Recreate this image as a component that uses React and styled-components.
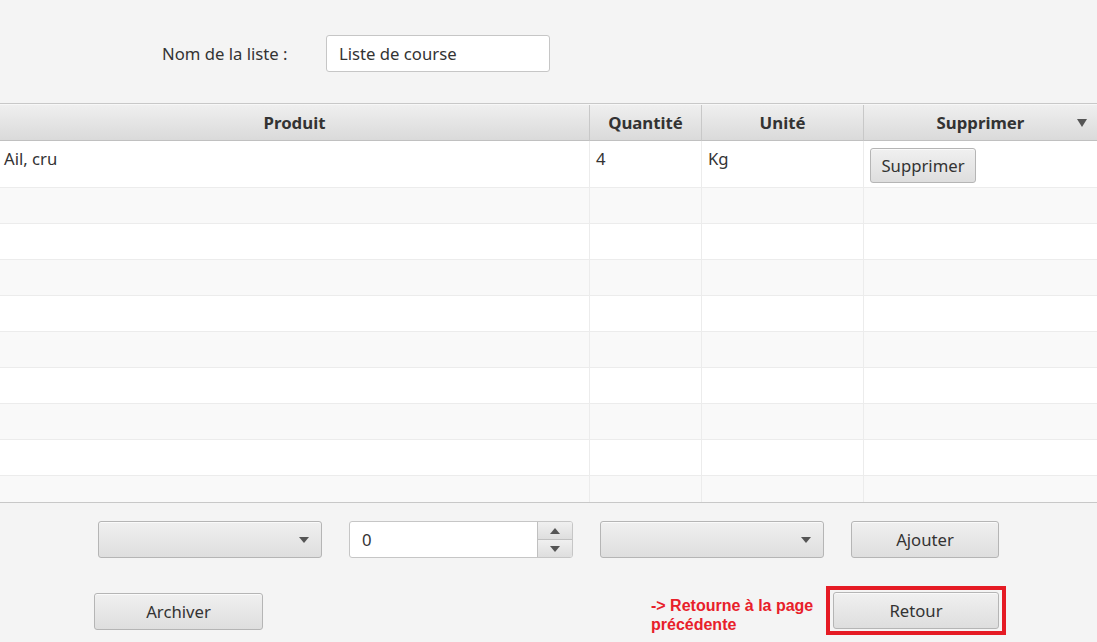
import React from 'react'
import styled, { createGlobalStyle } from 'styled-components'

const GlobalStyle = createGlobalStyle`
  html, body {
    margin: 0;
    padding: 0;
    background: #f4f4f4;
    font-family: "Noto Sans", "Open Sans", sans-serif;
    color: #333;
  }
  * { box-sizing: border-box; }
`

const Page = styled.div`
  width: 1097px;
  height: 642px;
  overflow: hidden;
  display: flex;
  flex-direction: column;
  background: #f4f4f4;
`

const TopBar = styled.div`
  height: 103px;
  display: flex;
  align-items: center;
  padding-left: 162px;
  padding-top: 4px;
`

const Label = styled.span`
  font-size: 16.7px;
  color: #333;
  width: 164px;
`

const TextInput = styled.div`
  width: 224px;
  height: 37px;
  background: #fff;
  border: 1px solid #c6c6c6;
  border-radius: 3px;
  display: flex;
  align-items: center;
  padding-left: 12px;
  font-size: 16.7px;
  color: #333;
`

const Table = styled.div`
  border-top: 1px solid #c8c8c8;
  border-bottom: 1px solid #c8c8c8;
  display: flex;
  flex-direction: column;
`

const Cols = '590px 112px 162px 1fr'

const HeaderRow = styled.div`
  display: grid;
  grid-template-columns: ${Cols};
  height: 37px;
  border-top: 1px solid #f7f7f7;
`

const HeaderCell = styled.div`
  position: relative;
  display: flex;
  align-items: center;
  justify-content: center;
  font-weight: 700;
  font-size: 16.8px;
  color: #333;
  background: linear-gradient(#efefef, #dadada);
  border-right: 1px solid #c8c8c8;
  border-bottom: 1px solid #c0c0c0;
  &:last-child { border-right: none; }
`

const MenuArrow = styled.span`
  position: absolute;
  right: 10px;
  top: 14px;
  width: 0;
  height: 0;
  border-left: 5px solid transparent;
  border-right: 5px solid transparent;
  border-top: 8px solid #555;
`

const Body = styled.div`
  height: 361px;
  overflow: hidden;
`

const Row = styled.div`
  display: grid;
  grid-template-columns: ${Cols};
  height: ${({ $h }) => $h}px;
  background: ${({ $odd }) => ($odd ? '#f9f9f9' : '#ffffff')};
  border-bottom: 1px solid #ececec;
`

const Cell = styled.div`
  border-right: 1px solid #ececec;
  padding: 6px 0 0 ${({ $pl }) => $pl || 4}px;
  font-size: 16.7px;
  color: #333;
  &:last-child { border-right: none; }
`

const Button = styled.div`
  width: ${({ $w }) => $w}px;
  height: ${({ $h }) => $h || 37}px;
  display: flex;
  align-items: center;
  justify-content: center;
  border: 1px solid #b5b5b5;
  border-radius: 3px;
  background: linear-gradient(#f0f0f0, #dedede);
  box-shadow: inset 0 1px 0 #fafafa;
  font-size: 16.7px;
  color: #333;
`

const CellButton = styled(Button)`
  margin-top: 1px;
`

const Bottom = styled.div`
  flex: 1;
  display: flex;
  flex-direction: column;
  padding-top: 18px;
`

const ControlsRow = styled.div`
  display: flex;
  align-items: center;
  padding-left: 98px;
  gap: 27px;
`

const Combo = styled(Button)`
  justify-content: flex-end;
  padding-right: 12px;
`

const DownTri = styled.span`
  width: 0;
  height: 0;
  border-left: 5px solid transparent;
  border-right: 5px solid transparent;
  border-top: 6px solid #555;
`

const UpTri = styled(DownTri)`
  border-top: none;
  border-bottom: 6px solid #555;
`

const Spinner = styled.div`
  width: 224px;
  height: 37px;
  border: 1px solid #c6c6c6;
  border-radius: 3px;
  background: #fff;
  display: flex;
  overflow: hidden;
`

const SpinnerValue = styled.div`
  flex: 1;
  display: flex;
  align-items: center;
  padding-left: 12px;
  font-size: 16.7px;
  color: #333;
`

const SpinnerArrows = styled.div`
  width: 35px;
  display: flex;
  flex-direction: column;
  border-left: 1px solid #c0c0c0;
`

const ArrowBtn = styled.div`
  flex: 1;
  display: flex;
  align-items: center;
  justify-content: center;
  background: linear-gradient(#f0f0f0, #dedede);
  & + & { border-top: 1px solid #c0c0c0; }
`

const ActionsRow = styled.div`
  display: flex;
  align-items: center;
  margin-top: 30px;
  padding-left: 94px;
`

const Note = styled.div`
  margin-left: 388px;
  font-family: "Liberation Sans", Arial, sans-serif;
  font-weight: 700;
  font-size: 16px;
  line-height: 19px;
  color: #e8202a;
  width: 175px;
  margin-top: 6px;
`

const Highlight = styled.div`
  border: 4px solid #e51b24;
  padding: 2px 3px;
  margin-top: -2px;
`

const rows = [
  { h: 47, cells: ['Ail, cru', '4', 'Kg'], btn: true },
  ...Array.from({ length: 9 }, () => ({ h: 36, cells: ['', '', ''] })),
]

export default function App() {
  return (
    <Page>
      <GlobalStyle />
      <TopBar>
        <Label>Nom de la liste :</Label>
        <TextInput>Liste de course</TextInput>
      </TopBar>
      <Table>
        <HeaderRow>
          <HeaderCell>Produit</HeaderCell>
          <HeaderCell>Quantité</HeaderCell>
          <HeaderCell>Unité</HeaderCell>
          <HeaderCell>
            Supprimer
            <MenuArrow />
          </HeaderCell>
        </HeaderRow>
        <Body>
          {rows.map((r, i) => (
            <Row key={i} $h={r.h} $odd={i % 2 === 1}>
              <Cell>{r.cells[0]}</Cell>
              <Cell $pl={6}>{r.cells[1]}</Cell>
              <Cell $pl={6}>{r.cells[2]}</Cell>
              <Cell $pl={6}>
                {r.btn && <CellButton $w={106} $h={35}>Supprimer</CellButton>}
              </Cell>
            </Row>
          ))}
        </Body>
      </Table>
      <Bottom>
        <ControlsRow>
          <Combo $w={224}><DownTri /></Combo>
          <Spinner>
            <SpinnerValue>0</SpinnerValue>
            <SpinnerArrows>
              <ArrowBtn><UpTri /></ArrowBtn>
              <ArrowBtn><DownTri /></ArrowBtn>
            </SpinnerArrows>
          </Spinner>
          <Combo $w={224}><DownTri /></Combo>
          <Button $w={148}>Ajouter</Button>
        </ControlsRow>
        <ActionsRow>
          <Button $w={169}>Archiver</Button>
          <Note>-&gt; Retourne à la page précédente</Note>
          <Highlight>
            <Button $w={166}>Retour</Button>
          </Highlight>
        </ActionsRow>
      </Bottom>
    </Page>
  )
}
